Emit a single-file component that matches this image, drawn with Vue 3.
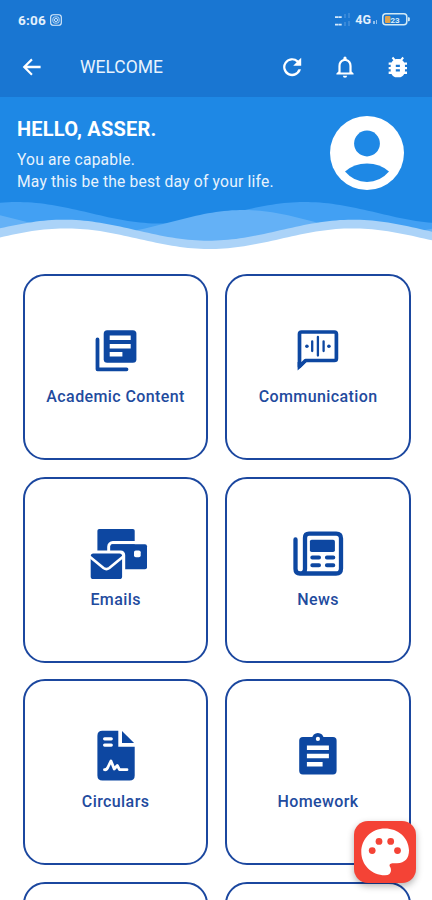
<script setup>
const cards = [
  { id: 'academic', label: 'Academic Content' },
  { id: 'communication', label: 'Communication' },
  { id: 'emails', label: 'Emails' },
  { id: 'news', label: 'News' },
  { id: 'circulars', label: 'Circulars' },
  { id: 'homework', label: 'Homework' },
  { id: 'more-left', label: '' },
  { id: 'more-right', label: '' }
]

// Builds a filled wave, closed along the bottom of the 432x52 strip
const wave = (mid, amp, peak, period) => {
  let d = 'M0 52'
  for (let x = 0; x <= 432; x += 4) {
    const y = mid - amp * Math.cos((2 * Math.PI * (x - peak)) / period)
    d += `L${x} ${y.toFixed(2)}`
  }
  return d + 'L432 52Z'
}

const waves = [
  { color: '#42a0f3', d: wave(12.8, 10.8, 17, 288) },
  { color: '#64b1f6', d: wave(22, 12, -45, 288) },
  { color: '#abd3f8', d: wave(30.2, 10.5, 64, 289) },
  { color: '#ffffff', d: wave(38.7, 10.3, 66, 287) }
]
</script>

<template>
  <div class="screen">
    <header class="top">
      <div class="status-bar">
        <span class="time">6:06</span>
        <svg class="insta" viewBox="0 0 12 12" fill="none" stroke="currentColor">
          <rect x="0.7" y="0.7" width="10.6" height="10.6" rx="2.6" stroke-width="1.1" />
          <rect x="2.9" y="2.9" width="6.2" height="6.2" rx="2" stroke-width="0.8" />
          <circle cx="6" cy="6" r="1.6" stroke-width="0.9" />
        </svg>
        <span class="spacer"></span>
        <svg class="signal" viewBox="0 0 17 14" fill="none" stroke="#d6e9fb">
          <path d="M1 4.2h7M1 11.6h7" stroke-width="1.8" stroke-dasharray="3 .3" />
          <path d="M11 1v4M15 0v5M11 9v4M15 8v5" stroke-width="1" opacity=".35" />
        </svg>
        <span class="network">4G</span>
        <svg class="data" viewBox="0 0 5 5"><path d="M0 1h2v3H0zM3 0h1v4H3z" fill="#8fc0ee" /></svg>
        <svg class="battery" viewBox="0 0 28 13">
          <rect x="0.8" y="0.8" width="24" height="11" rx="3" fill="none" stroke="#d3eaf5" stroke-width="1.5" />
          <path d="M26 4.3h.8q1 0 1 1v2q0 1-1 1H26z" fill="#d3eaf5" />
          <rect x="3" y="3" width="5.5" height="7" rx="1" fill="#e0a34e" />
          <text x="13" y="9.5" text-anchor="middle" fill="#d8edfa" class="charge">23</text>
        </svg>
      </div>

      <nav class="app-bar">
        <svg class="bar-icon" viewBox="0 0 24 24"><path d="M20.6 10.8H7.1l5.6-5.6L11.2 3.5 2.7 12l8.5 8.5 1.5-1.6-5.6-5.7h13.5z" /></svg>
        <h1 class="title">WELCOME</h1>
        <span class="spacer"></span>
        <svg class="bar-icon" viewBox="0 0 24 24">
          <path d="M18.3 5.6A9 9 0 1 0 20.9 14.3h-2.5A6.7 6.7 0 1 1 16.7 7.2L13.2 10.7h8V2.7z" />
        </svg>
        <svg class="bar-icon" viewBox="0 0 24 24">
          <path d="M12 22.8a2.1 2.1 0 0 0 2.1-2.1H9.9A2.1 2.1 0 0 0 12 22.8zM18.6 16.6V11c0-3.5-1.8-6.2-5-7v-.8a1.6 1.6 0 0 0-3.2 0V4c-3.2.8-5 3.5-5 7v5.6l-2 1.9v1.1h17.2v-1.1zm-2.2 1H7.6V11C7.6 8.2 9.3 6 12 6s4.400 2.200 4.400 5z" />
        </svg>
        <svg class="bar-icon" viewBox="0 0 24 24">
          <path d="M21 8h-2.810c-.450-.780-1.070-1.450-1.820-1.960L18 4.410 16.590 3l-2.170 2.170C13.960 5.060 13.490 5 13 5h-2c-.490 0-.960.060-1.410.170L7.410 3 6 4.410l1.620 1.630C6.880 6.550 6.260 7.220 5.810 8H3v2h2.090C5.040 10.330 5 10.660 5 11v1H3v2h2v1c0 .340.040.670.090 1H3v2h2.810C6.850 19.790 8.790 21 11 21h2c2.210 0 4.150-1.210 5.190-3H21v-2h-2.090c.050-.330.090-.660.090-1v-1h2v-2h-2v-1c0-.340-.040-.670-.090-1H21zm-7 8h-4v-2h4zm0-4h-4v-2h4z" transform="translate(-.4 -1.800) scale(1.020 1.150)" />
        </svg>
      </nav>
    </header>

    <section class="hero">
      <div class="hero-row">
        <div>
          <h2 class="greeting">HELLO, ASSER.</h2>
          <p class="message">You are capable.<br />May this be the best day of your life.</p>
        </div>
        <svg class="avatar" viewBox="0 0 74 74">
          <circle cx="37" cy="37" r="37" fill="#fff" />
          <circle cx="37" cy="27.5" r="12.9" fill="#1e88e5" />
          <path d="M15 55.5Q24 47.5 37 47.5T59 55.5Q50 66 37 66T15 55.5Z" fill="#1e88e5" />
        </svg>
      </div>
      <svg class="waves" viewBox="0 0 432 52">
        <path v-for="w in waves" :key="w.color" :d="w.d" :fill="w.color" />
      </svg>
    </section>

    <main class="grid">
      <div v-for="card in cards" :key="card.id" class="card">
        <svg class="card-icon" viewBox="0 0 60 60">
          <g v-if="card.id === 'academic'">
            <path d="M11.5 18.5V48.3H40.5" class="line" stroke-width="3.8" />
            <rect x="17.7" y="9.2" width="32.7" height="32.6" rx="3.5" />
            <path d="M23.7 14.5h21v4.5h-21zM23.7 22.9h21v4.5h-21zM23.7 31h12.7v4.5H23.7z" fill="#fff" />
          </g>
          <g v-else-if="card.id === 'communication'">
            <path d="M11.5 45.5V13Q11.5 11 13.5 11H46.4Q48.4 11 48.4 13V37.5Q48.4 39.5 46.4 39.5H17.5Z" class="line sharp" stroke-width="3.7" />
            <path d="M9.65 41V49.5L18.5 41Z" />
            <path d="M24.2 20.3v9.8M29.9 16v18.6M35.6 20.3v9.8" class="line" stroke-width="2.3" />
            <circle cx="18.9" cy="25.2" r="1.8" />
            <circle cx="40.9" cy="25.2" r="1.8" />
          </g>
          <g v-else-if="card.id === 'emails'">
            <rect x="11.4" y="5" width="37.3" height="26" rx="1.8" />
            <rect x="22.8" y="18.7" width="39.8" height="28.2" rx="4" fill="none" stroke="#fff" stroke-width="3.2" />
            <rect x="24.4" y="20.3" width="36.6" height="25" rx="2" />
            <rect x="48" y="26.5" width="6.7" height="6.7" rx="1.8" fill="#fff" />
            <rect x="1.7" y="26.5" width="37.5" height="31.5" rx="4.5" fill="#fff" />
            <rect x="4.7" y="29.6" width="31.4" height="25.4" rx="2.6" />
            <path d="M3.5 32.5L17.5 44Q20.4 46.2 23.3 44L37.3 32.5" fill="none" stroke="#fff" stroke-width="2.7" />
          </g>
          <g v-else-if="card.id === 'news'">
            <path d="M7.5 15.500V45Q7.5 49.5 12 49.5H48Q53 49.5 53 44.5V14.5Q53 9.700 48.200 9.700H21Q17 9.700 17 13.700V45Q17 49.500 12 49.500" class="line" stroke-width="4.3" />
            <rect x="21.9" y="15.7" width="25" height="12.4" rx="1.8" />
            <path d="M24.3 33.6h6.7M38.9 33.6h6.4M24.3 41.3h6.7M38.9 41.3h6.4" class="line" stroke-width="4" />
          </g>
          <g v-else-if="card.id === 'circulars'">
            <path d="M16.4 4.8H32.3V20.8H48.7V49.4Q48.7 54.4 43.7 54.4H16.4Q11.4 54.4 11.4 49.4V9.8Q11.4 4.8 16.4 4.8Z" />
            <path d="M36 5V17.1H48.1Z" />
            <path d="M18.6 12.8h6.7M18.6 19.1h6.7" class="line white" stroke-width="3.2" />
            <path d="M18.5 43.7Q21 44 22 41L25 34.9L28.2 43L31.3 39.5L33.5 43.7H41" class="line white" stroke-width="2.8" />
          </g>
          <g v-else-if="card.id === 'homework'">
            <rect x="11.2" y="11.1" width="37.4" height="37.3" rx="3.6" />
            <circle cx="29.9" cy="12.7" r="5.8" />
            <circle cx="29.9" cy="12.9" r="2.1" fill="#fff" />
            <path d="M18.9 19.5h22v4.5h-22zM18.9 27.7h22v4.5h-22zM18.9 35.9h15.7v4.5H18.9z" fill="#fff" />
          </g>
        </svg>
        <span class="card-label">{{ card.label }}</span>
      </div>
    </main>

    <button class="palette" aria-label="Theme">
      <svg viewBox="0 0 62 62">
        <path d="M31 7.6C17.6 7.6 7.3 18 7.3 31S17.6 54.3 31 54.3Q37 54.3 37 49.2Q37 47 35.7 45.3Q34.8 42.7 38.2 42.2H43Q55 41.5 55 29.2C54.5 16.5 44 7.6 31 7.6Z" fill="#fff" />
        <circle cx="18.2" cy="29.6" r="3.4" />
        <circle cx="25" cy="20.4" r="3.4" />
        <circle cx="36.7" cy="20.4" r="3.4" />
        <circle cx="43.5" cy="29.6" r="3.4" />
      </svg>
    </button>
  </div>
</template>

<style>
body {
  margin: 0;
}
</style>

<style scoped>
.screen {
  position: relative;
  width: 432px;
  height: 900px;
  overflow: hidden;
  background: #fff;
  font-family: Roboto, "Liberation Sans", sans-serif;
}

.top {
  height: 97px;
  background: #1976d2;
  color: #fff;
}

.status-bar {
  height: 39px;
  box-sizing: border-box;
  padding: 0 22px 0 18px;
  display: flex;
  align-items: center;
  color: #e3f0fc;
}

.time {
  width: 28px;
  font-size: 13.5px;
  font-weight: 700;
  letter-spacing: 0.2px;
}

.insta {
  width: 12px;
  height: 12px;
  margin-left: 4px;
}

.spacer {
  flex: 1;
}

.signal {
  width: 17px;
  height: 14px;
}

.network {
  margin-left: 4px;
  font-size: 12.5px;
  font-weight: 700;
}

.data {
  width: 5px;
  height: 5px;
  margin: 6px 4px 0 2px;
}

.battery {
  width: 28px;
  height: 13px;
}

.charge {
  font-size: 8px;
  font-weight: 700;
}

.app-bar {
  height: 56px;
  padding: 0 22px 0 20px;
  display: flex;
  align-items: center;
}

.bar-icon {
  width: 24px;
  height: 24px;
  fill: #fff;
}

.bar-icon + .bar-icon {
  margin-left: 29px;
}

.title {
  margin: 0 0 0 36px;
  font-size: 17.5px;
  font-weight: 400;
  color: #e8f3fd;
}

.hero {
  height: 155px;
  background: #1e88e5;
}

.hero-row {
  height: 103px;
  box-sizing: border-box;
  padding: 19px 28px 0 17px;
  display: flex;
  justify-content: space-between;
  align-items: flex-start;
}

.greeting {
  margin: 0;
  font-size: 20px;
  line-height: 26px;
  font-weight: 700;
  letter-spacing: 0.2px;
  color: #fff;
}

.message {
  margin: 7px 0 0;
  font-size: 15.6px;
  line-height: 22px;
  letter-spacing: 0.2px;
  color: #e8f3fd;
}

.avatar {
  width: 74px;
  height: 74px;
}

.waves {
  display: block;
  width: 432px;
  height: 52px;
}

.grid {
  padding: 22.3px 21px 0 22.7px;
  display: grid;
  grid-template-columns: 185.8px 185.8px;
  grid-auto-rows: 185.8px;
  gap: 16.7px;
}

.card {
  box-sizing: border-box;
  padding-top: 45px;
  display: flex;
  flex-direction: column;
  align-items: center;
  border: 2px solid #1b479f;
  border-radius: 22px;
}

.card-icon {
  width: 60px;
  height: 60px;
  overflow: visible;
  fill: #0d47a1;
}

.line {
  fill: none;
  stroke: #0d47a1;
  stroke-linecap: round;
  stroke-linejoin: round;
}

.line.white {
  stroke: #fff;
}

.line.sharp {
  stroke-linecap: butt;
}

.card-label {
  margin-top: 5px;
  font-size: 16px;
  line-height: 22px;
  font-weight: 500;
  letter-spacing: 0.4px;
  color: #1f4b9e;
}

.palette {
  position: absolute;
  right: 16.5px;
  bottom: 17.3px;
  width: 62px;
  height: 62px;
  padding: 0;
  border: none;
  border-radius: 14px;
  background: #f44336;
  box-shadow: 0 3px 7px rgba(0, 0, 0, 0.3);
}

.palette svg {
  display: block;
  width: 62px;
  height: 62px;
  fill: #f44336;
}
</style>
